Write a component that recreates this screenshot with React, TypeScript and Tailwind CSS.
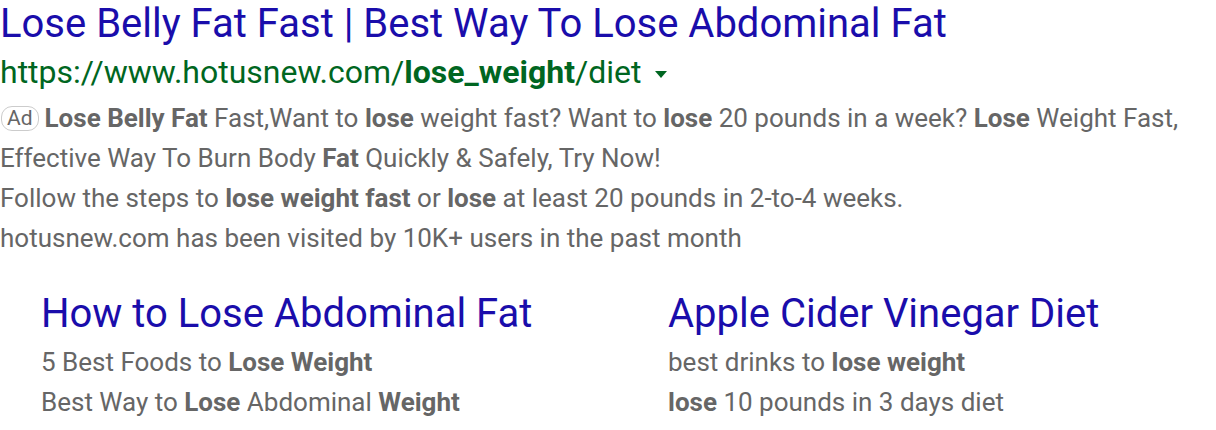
export default function App() {
    return (
        <main className="w-[1216px] h-[430px] bg-white font-['Roboto',sans-serif] overflow-hidden">
            {/* Ad title + url */}
            <h1 className="text-[40px] leading-[48px] text-[#1a0dab] whitespace-nowrap">
                Lose Belly Fat Fast | Best Way To Lose Abdominal Fat
            </h1>
            <div className="flex items-center text-[32px] leading-[48px] text-[#006621] whitespace-nowrap">
                <span>
                    https://www.hotusnew.com/<b className="font-bold">lose_weight</b>/diet
                </span>
                <span className="ml-[13px] mt-[4px] w-0 h-0 border-l-[6px] border-r-[6px] border-t-[7px] border-l-transparent border-r-transparent border-t-[#006621]" />
            </div>

            {/* Description */}
            <div className="mt-[2px] text-[26px] leading-[40px] text-[#666666]">
                <p className="whitespace-nowrap">
                    <span className="inline-block align-middle ml-[1px] mr-[6px] mb-[4px] px-[5px] text-[21px] leading-[23px] border border-[#cccccc] rounded-[11px]">
                        Ad
                    </span>
                    <b>Lose Belly Fat</b> Fast,Want to <b>lose</b> weight fast? Want to <b>lose</b> 20 pounds in a week? <b>Lose</b> Weight Fast,
                </p>
                <p>
                    Effective Way To Burn Body <b>Fat</b> Quickly &amp; Safely, Try Now!
                </p>
                <p>
                    Follow the steps to <b>lose weight fast</b> or <b>lose</b> at least 20 pounds in 2-to-4 weeks.
                </p>
                <p>hotusnew.com has been visited by 10K+ users in the past month</p>
            </div>

            {/* Sitelinks */}
            <div className="grid grid-cols-[627px_1fr] pl-[41px] mt-[32px]">
                <div>
                    <h2 className="text-[40px] leading-[48px] text-[#1a0dab]">How to Lose Abdominal Fat</h2>
                    <div className="mt-[4px] text-[26px] leading-[40px] text-[#666666]">
                        <p>5 Best Foods to <b>Lose Weight</b></p>
                        <p>Best Way to <b>Lose</b> Abdominal <b>Weight</b></p>
                    </div>
                </div>
                <div>
                    <h2 className="text-[40px] leading-[48px] text-[#1a0dab]">Apple Cider Vinegar Diet</h2>
                    <div className="mt-[4px] text-[26px] leading-[40px] text-[#666666]">
                        <p>best drinks to <b>lose weight</b></p>
                        <p><b>lose</b> 10 pounds in 3 days diet</p>
                    </div>
                </div>
            </div>
        </main>
    );
}
